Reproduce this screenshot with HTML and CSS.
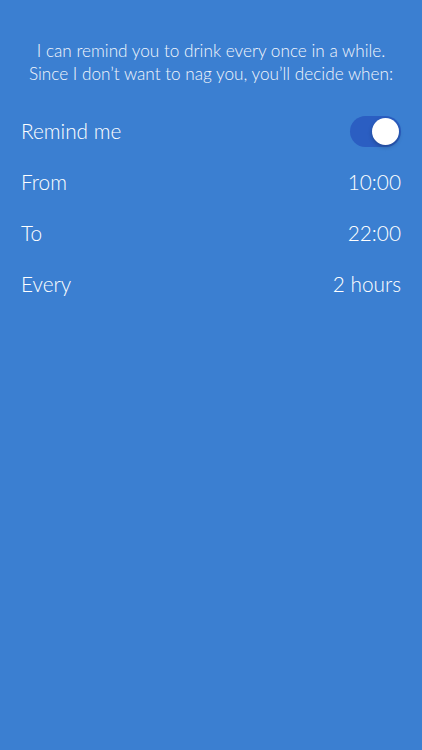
FILE: index.html
```html
<!DOCTYPE html>
<html lang="en">
<head>
    <meta charset="UTF-8">
    <meta name="viewport" content="width=device-width, initial-scale=1.0">
    <title>Reminders</title>
    <link rel="stylesheet" href="styles.css">
</head>
<body>
    <p class="intro">
        I can remind you to drink every once in a while.<br>
        Since I don’t want to nag you, you’ll decide when:
    </p>

    <div class="settings">
        <div class="row">
            <span class="label">Remind me</span>
            <span class="toggle"><span class="knob"></span></span>
        </div>
        <div class="row">
            <span class="label">From</span>
            <span class="value">10:00</span>
        </div>
        <div class="row">
            <span class="label">To</span>
            <span class="value">22:00</span>
        </div>
        <div class="row">
            <span class="label">Every</span>
            <span class="value">2 hours</span>
        </div>
    </div>
</body>
</html>
```

FILE: styles.css
```css
body {
    font-family: Lato, "Open Sans", sans-serif;
    font-weight: 300;
    background-color: #3b7fd1;
    color: #fff;
    margin: 0;
    padding: 0;
    height: 750px;
}
.intro {
    margin: 0;
    padding: 39px 0 0;
    text-align: center;
    font-size: 17.2px;
    line-height: 23px;
    color: #f2f6fc;
}
.settings {
    margin-top: 20px;
    padding: 0 21px;
}
.row {
    display: flex;
    justify-content: space-between;
    align-items: center;
    height: 51px;
    font-size: 20.8px;
}
.toggle {
    position: relative;
    width: 51px;
    height: 31px;
    margin-top: 2px;
    border-radius: 16px;
    background-color: #2b5ec2;
}
.knob {
    position: absolute;
    top: 2px;
    right: 2px;
    width: 27px;
    height: 27px;
    border-radius: 50%;
    background: #fff;
    box-shadow: 0 2px 4px rgba(0, 0, 0, 0.25);
}
```
